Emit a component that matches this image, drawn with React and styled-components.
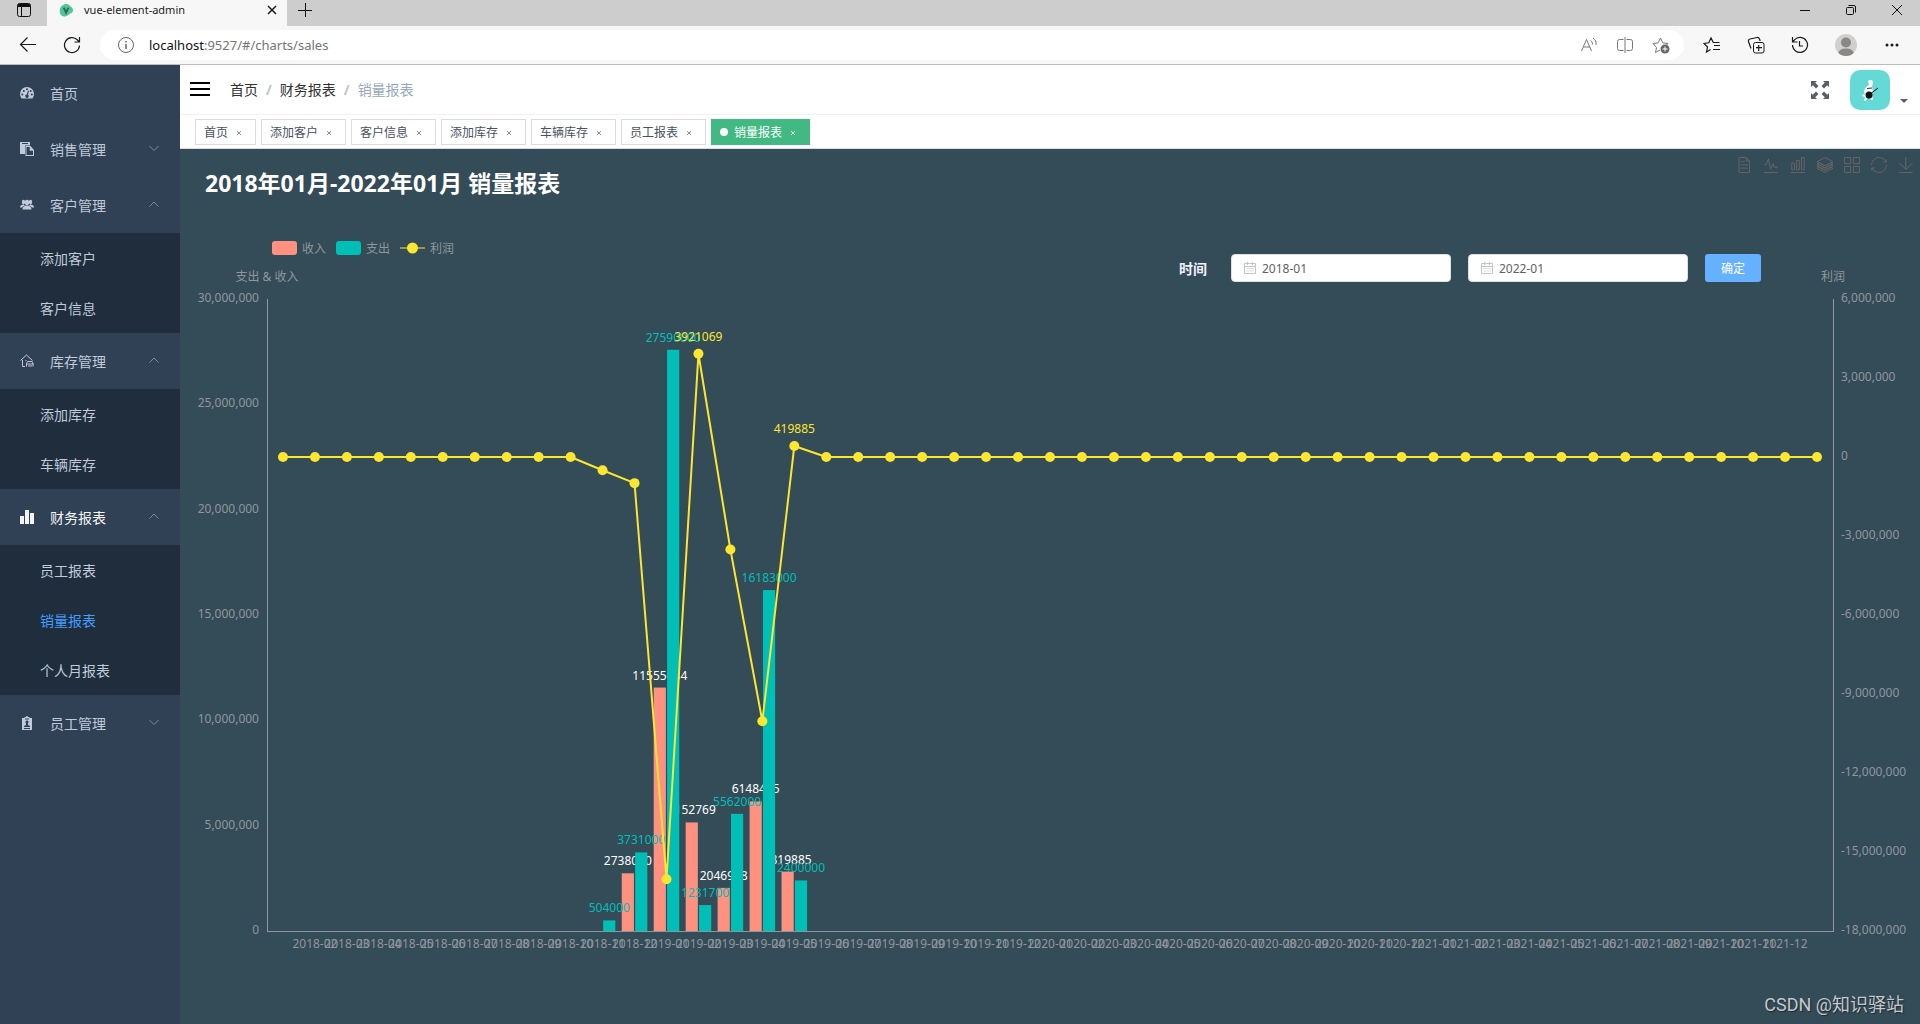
import React, { useLayoutEffect, useRef, useState } from "react";
import styled, { createGlobalStyle } from "styled-components";

const GlobalStyle = createGlobalStyle`
  * {
    box-sizing: border-box;
  }

  body {
    margin: 0;
    font-family: "Noto Sans", "Noto Sans CJK SC", sans-serif;
    font-size: 14px;
  }

  button,
  input {
    font-family: inherit;
  }

  button {
    padding: 0;
    border: 0;
    background: none;
    color: inherit;
    cursor: pointer;
  }

  a {
    color: inherit;
    text-decoration: none;
  }

  svg {
    display: block;
    flex-shrink: 0;
  }
`;

const Page = styled.div`
  display: flex;
  flex-direction: column;
  height: 100vh;
  overflow: hidden;
`;

/* browser window */

const TabStrip = styled.div`
  display: flex;
  height: 26px;
  background: #cdcdcd;
`;

const StripButton = styled.button`
  display: flex;
  align-items: center;
  justify-content: center;
  width: ${(props) => props.$width}px;
  height: 20px;
  color: #111;
`;

const BrowserTab = styled.div`
  display: flex;
  align-items: center;
  width: 240px;
  height: 26px;
  padding: 0 9px 6px 12px;
  background: #f7f7f7;
  font-size: 12px;
  line-height: 18px;
  color: #1b1b1b;
`;

const BrowserTitle = styled.span`
  flex: 1;
  margin-left: 10px;
  font-size: 11px;
`;

const WindowButtons = styled.div`
  display: flex;
  margin-left: auto;
`;

const AddressRow = styled.div`
  display: flex;
  align-items: center;
  height: 39px;
  padding: 0 6px;
  background: #f7f7f7;
  border-bottom: 1px solid #bdbdbd;
`;

const ToolButton = styled.button`
  display: flex;
  align-items: center;
  justify-content: center;
  width: ${(props) => props.$width || 44}px;
  height: 30px;
  color: ${(props) => props.$color || "#1b1b1b"};
`;

const AddressBar = styled.div`
  flex: 1;
  display: flex;
  align-items: center;
  height: 30px;
  margin: 0 6px;
  padding: 0 5px 0 18px;
  border-radius: 15px;
  background: #fff;
`;

const Url = styled.div`
  flex: 1;
  margin-left: 15px;
  font-size: 13px;
  color: #757575;

  span {
    color: #111;
  }
`;

const Face = styled.span`
  display: block;
  width: 22px;
  height: 22px;
  border-radius: 11px;
  overflow: hidden;
  background: #d2d0ce;
`;

/* app */

const Body = styled.div`
  flex: 1;
  display: flex;
  min-height: 0;
`;

const Sidebar = styled.nav`
  flex: 0 0 180px;
  background: #304156;
  color: #bfcbd9;
`;

const MenuItem = styled.button`
  display: flex;
  align-items: center;
  width: 100%;
  height: 56px;
  padding: 0 21px 0 20px;
  font-size: 14px;
  text-align: left;
  color: ${(props) => (props.$active ? "#f4f4f5" : "inherit")};

  span {
    flex: 1;
    margin-left: 16px;
  }
`;

const SubMenu = styled.div`
  background: #1f2d3d;
`;

const SubItem = styled.a`
  display: block;
  height: 50px;
  padding-left: 40px;
  line-height: 52px;
  color: ${(props) => (props.$active ? "#409eff" : "inherit")};
`;

const Main = styled.main`
  flex: 1;
  display: flex;
  flex-direction: column;
  min-width: 0;
`;

const Navbar = styled.header`
  display: flex;
  align-items: center;
  flex-shrink: 0;
  height: 50px;
  padding: 0 12px 0 10px;
  background: #fff;
  border-bottom: 1px solid #f0f1f3;
`;

const Breadcrumb = styled.div`
  flex: 1;
  margin-left: 20px;
  padding-bottom: 2px;
  color: #97a8be;

  a {
    color: #303133;
  }

  i {
    margin: 0 8px;
    font-style: normal;
    font-weight: 700;
    color: #c0c4cc;
  }
`;

const UserButton = styled.button`
  display: flex;
  align-items: flex-end;
  gap: 10px;
  margin-left: 20px;
`;

const Caret = styled.span`
  width: 8px;
  height: 11px;
  border: 4px solid transparent;
  border-top-color: #5a5e66;
  border-bottom-width: 3px;
`;

const Tags = styled.div`
  flex-shrink: 0;
  display: flex;
  align-items: flex-start;
  gap: 5px;
  height: 34px;
  padding: 4px 15px;
  background: #fff;
  border-bottom: 1px solid #d8dce5;
`;

const Tag = styled.a`
  display: flex;
  align-items: center;
  height: 26px;
  padding: 0 8px;
  border: 1px solid ${(props) => (props.$active ? "#42b983" : "#d8dce5")};
  background: ${(props) => (props.$active ? "#42b983" : "#fff")};
  color: ${(props) => (props.$active ? "#fff" : "#495060")};
  font-size: 12px;
`;

const Dot = styled.span`
  width: 8px;
  height: 8px;
  margin-right: 6px;
  border-radius: 4px;
  background: #fff;
`;

const TagClose = styled.button`
  display: flex;
  align-items: center;
  justify-content: center;
  width: 16px;
  height: 16px;
  margin: 2px 0 0 3px;
  color: ${(props) => (props.$active ? "#d5efe3" : "#8a8e96")};
`;

const Report = styled.section`
  position: relative;
  flex: 1;
  display: flex;
  flex-direction: column;
  min-height: 0;
  background: #344b58;
`;

const ReportHead = styled.div`
  flex-shrink: 0;
  display: flex;
  justify-content: space-between;
  height: 84px;
  padding: 0 6px 0 25px;
`;

const Title = styled.h1`
  margin: 0;
  font-size: 23px;
  line-height: 68px;
  color: #fff;
`;

const Toolbox = styled.div`
  display: flex;
  gap: 11px;
  padding-top: 7px;
  height: 24px;

  path {
    fill: none;
    stroke: #666;
    vector-effect: non-scaling-stroke;
  }
`;

const Legend = styled.div`
  flex-shrink: 0;
  display: flex;
  align-items: center;
  gap: 10px;
  height: 31px;
  padding: 0 0 2px calc(5% + 5px);
  font-size: 12px;
  color: #90979c;
`;

const LegendItem = styled.button`
  display: flex;
  align-items: center;
  gap: 5px;
  font-size: 12px;
`;

const Swatch = styled.span`
  width: 25px;
  height: 14px;
  border-radius: 3px;
  background: ${(props) => props.$color};
`;

const Filter = styled.form`
  position: absolute;
  top: 105px;
  right: 159px;
  display: flex;
  align-items: center;
  gap: 17px;
  color: #fff;
`;

const FilterLabel = styled.label`
  margin-right: 7px;
  font-weight: 700;
  color: #f0f2ff;
`;

const DateBox = styled.div`
  display: flex;
  align-items: center;
  width: 220px;
  height: 28px;
  padding: 0 12px;
  border: 1px solid #dcdfe6;
  border-radius: 4px;
  background: #fff;
  color: #c0c4cc;
`;

const DateInput = styled.input`
  flex: 1;
  min-width: 0;
  margin-left: 6px;
  padding: 0;
  border: 0;
  outline: 0;
  font-size: 12px;
  color: #606266;
`;

const Submit = styled.button`
  width: 56px;
  height: 28px;
  border-radius: 3px;
  background: #66b1ff;
  color: #fff;
  font-size: 12px;
`;

const Plot = styled.div`
  flex: 1;
  min-height: 0;
  overflow: hidden;

  text {
    font-size: 12px;
    fill: #90979c;
  }

  .axis {
    stroke: #90979c;
    shape-rendering: crispEdges;
  }
`;

const ValueLabel = styled.text`
  && {
    fill: ${(props) => props.$color};
    text-anchor: middle;
  }
`;

const Watermark = styled.div`
  position: absolute;
  right: 16px;
  bottom: 6px;
  font-family: Roboto, "Noto Sans CJK SC", sans-serif;
  font-size: 18px;
  line-height: 26px;
  color: #c3c9cd;
  text-shadow: 1px 1px 1px #1d2a31;
`;

const Icon = ({ size = 16, box = 16, fill = "none", stroke = "currentColor", children }) => (
  <svg
    width={size}
    height={size}
    viewBox={`0 0 ${box} ${box}`}
    fill={fill}
    stroke={stroke}
    aria-hidden="true"
  >
    {children}
  </svg>
);

const GaugeIcon = () => (
  <Icon size={14} box={14} fill="currentColor" stroke="none">
    <path d="M1.500 12.500A7 7 0 0 1 0 8a7 7 0 0 1 14 0 7 7 0 0 1-1.500 4.500z" />
    <g fill="#304156">
      <circle cx="2.300" cy="8.500" r="1" />
      <circle cx="3.800" cy="5" r="1" />
      <circle cx="7" cy="3.200" r="1" />
      <circle cx="10.700" cy="5" r="1" />
      <circle cx="11.800" cy="8.500" r="1" />
      <path d="M8 4.500l1 .3-1 4a1.700 1.700 0 1 1-1.200-.3z" />
    </g>
  </Icon>
);

const PasteIcon = () => (
  <Icon size={14} box={14} fill="currentColor" stroke="none">
    <path fillRule="evenodd" d="M0 0h10v3.500H5V12H0zM2 1v1h6V1z" />
    <path
      fillRule="evenodd"
      d="M5.500 4h5L14 8v6H5.500zM6.500 5v8H13V8.800H9.700V5z"
    />
  </Icon>
);

const PeopleIcon = () => (
  <Icon size={14} box={14} fill="currentColor" stroke="none">
    <ellipse cx="3.500" cy="4" rx="1.700" ry="2.200" />
    <ellipse cx="10.500" cy="4" rx="1.700" ry="2.200" />
    <ellipse cx="7" cy="4.500" rx="2.200" ry="2.800" />
    <path d="M0 9.500c0-2 1.500-2.800 3.500-3.200L5 7.500C3.300 8 2.500 8.700 2.300 9.500zM14 9.500c0-2-1.500-2.800-3.500-3.200L9 7.500c1.700.5 2.500 1.200 2.700 2z" />
    <path d="M2.500 11.500c0-2.500 1.500-3.200 3.500-4h2c2 .8 3.500 1.500 3.500 4z" />
  </Icon>
);

const HouseIcon = () => (
  <Icon size={14} box={14}>
    <path d="M.5 6.500L6.500 1l6 5.500M2.500 6v6.500H5M5.500 6.500h1" />
    <path d="M6.500 12.500V9.500l1-2h4.500l1 2v3M6.500 10h7M8 12h4" />
  </Icon>
);

const BarsIcon = () => (
  <Icon size={14} box={14} fill="currentColor" stroke="none">
    <path d="M0 6h4v8H0zM5 0h4v14H5zM10 3h4v11h-4z" />
  </Icon>
);

const BadgeIcon = () => (
  <Icon size={14} box={14} fill="currentColor" stroke="none">
    <path
      fillRule="evenodd"
      d="M2 2h2.500V1H6a1 1 0 0 1 2 0h1.500v1H12v12H2zM5 2.500v1h4v-1zM7 4.500a1.500 1.500 0 0 0-1 2.700V9L4 10v1h6v-1L8 9V7.200a1.500 1.500 0 0 0-1-2.700zM4 12v1h6v-1z"
    />
  </Icon>
);

const Chevron = ({ up }) => (
  <Icon size={10} box={10} stroke="#7f8a99">
    <path d={up ? "M.5 6.500L5 2 9.500 6.500" : "M.5 2L5 6.500 9.500 2"} />
  </Icon>
);

const menu = [
  { title: "首页", icon: <GaugeIcon /> },
  { title: "销售管理", icon: <PasteIcon />, children: [] },
  { title: "客户管理", icon: <PeopleIcon />, children: ["添加客户", "客户信息"] },
  { title: "库存管理", icon: <HouseIcon />, children: ["添加库存", "车辆库存"] },
  {
    title: "财务报表",
    icon: <BarsIcon />,
    active: true,
    children: ["员工报表", "销量报表", "个人月报表"],
  },
  { title: "员工管理", icon: <BadgeIcon />, children: [] },
];

const tags = ["首页", "添加客户", "客户信息", "添加库存", "车辆库存", "员工报表", "销量报表"];
const current = "销量报表";

const tools = [
  ["数据视图", "M17.5,17.3H33M45.4,29.5h-28M11.500,2v56H51V14.8L38.4,2H11.5zM38.4,2.2v12.7H51M45.4,41.7h-28"],
  ["切换为折线图", "M4.1,28.9h7.1l9.3-22l7.4,38l9.7-19.7l3,12.8h14.9M4.1,58h51.4"],
  ["切换为柱状图", "M6.7,22.9h10V48h-10V22.9zM24.9,13h10v35h-10V13zM43.2,2h10v46h-10V2zM3.1,58h53.7"],
  [
    "切换为堆叠",
    "M8.2,38.4l-8.4,4.1l30.6,15.3L60,42.5l-8.1-4.1l-21.5,11L8.2,38.4zM51.9,30l-8.1,4.2l-13.4,6.9l-13.9-6.9L8.2,30l-8.4,4.2l8.4,4.2l22.2,11l21.5-11l8.1-4.2L51.9,30zM51.9,21.7l-8.1,4.2L35.7,30l-5.3,2.8L24.9,30l-8.4-4.1l-8.3-4.2l-8.4,4.2L8.2,30l8.3,4.2l13.9,6.9l13.4-6.9l8.1-4.2l8.1-4.1L51.9,21.7zM30.4,2.2L-0.2,17.5l8.4,4.1l8.3,4.2l8.4,4.2l5.5,2.7l5.3-2.7l8.1-4.2l8.1-4.2l8.1-4.1L30.4,2.2z",
  ],
  ["切换为平铺", "M2.3,2.2h22.8V25H2.3V2.2zM35,2.2h22.8V25H35V2.2zM2.3,35h22.8v22.8H2.3V35zM35,35h22.8v22.8H35V35z"],
  [
    "还原",
    "M47,18.9h9.8V8.7M56.3,20.1C52.1,9,40.5,0.6,26.8,2.1C12.6,3.7,1.6,16.2,2.1,30.6M13,41.1H3.1v10.2M3.7,39.9c4.2,11.1,15.8,19.5,29.5,18c14.2-1.6,25.2-14.1,24.7-28.5",
  ],
  ["保存为图片", "M4.7,22.9L29.3,45.5L54.7,23.4M4.6,58H54.8M29.2,45.1V0"],
];

const months = Array.from({ length: 49 }, (_, i) => {
  const month = String((i % 12) + 1).padStart(2, "0");
  return `${2018 + Math.floor(i / 12)}-${month}`;
});

const income = {
  "2018-12": 2738000,
  "2019-01": 11555084,
  "2019-02": 5152769,
  "2019-03": 2046948,
  "2019-04": 6148465,
  "2019-05": 2819885,
};

const expense = {
  "2018-11": 504000,
  "2018-12": 3731000,
  "2019-01": 27590000,
  "2019-02": 1231700,
  "2019-03": 5562000,
  "2019-04": 16183000,
  "2019-05": 2400000,
};

const SalesChart = () => {
  const ref = useRef(null);
  const [size, setSize] = useState({ width: 1740, height: 760 });

  useLayoutEffect(() => {
    const measure = () =>
      setSize({ width: ref.current.clientWidth, height: ref.current.clientHeight });
    measure();
    window.addEventListener("resize", measure);
    return () => window.removeEventListener("resize", measure);
  }, []);

  const { width, height } = size;
  const left = Math.round(width * 0.05);
  const right = width - left;
  const top = 35;
  const bottom = height - 93;
  const band = (right - left) / months.length;
  const barWidth = (band * 0.8) / 2.1;
  const plotHeight = bottom - top;

  const x = (i) => left + band * (i + 0.5);
  const yMoney = (value) => bottom - (value / 30000000) * plotHeight;
  const yProfit = (value) => top + ((6000000 - value) / 24000000) * plotHeight;

  const points = months.map((month, i) => {
    const value = (income[month] || 0) - (expense[month] || 0);
    return { month, value, x: x(i), y: yProfit(value) };
  });

  const renderBars = (data, color, labelColor, offset) =>
    months.map((month, i) => {
      const value = data[month];
      if (!value) return null;
      const barX = x(i) + offset;
      const barY = yMoney(value);
      return (
        <g key={month}>
          <rect x={barX} y={barY} width={barWidth} height={bottom - barY} fill={color} />
          <ValueLabel $color={labelColor} x={barX + barWidth / 2} y={barY - 8}>
            {value}
          </ValueLabel>
        </g>
      );
    });

  return (
    <Plot ref={ref}>
      <svg width={width} height={height}>
        <path className="axis" fill="none" d={`M${left}.5 ${top}V${bottom}.5H${right}.5V${top}`} />
        <text x={left} y={17} textAnchor="middle">
          支出 &amp; 收入
        </text>
        <text x={right} y={17} textAnchor="middle">
          利润
        </text>
        {[30, 25, 20, 15, 10, 5, 0].map((n) => (
          <text key={n} x={left - 8} y={yMoney(n * 1000000) + 3} textAnchor="end">
            {(n * 1000000).toLocaleString("en-US")}
          </text>
        ))}
        {[6, 3, 0, -3, -6, -9, -12, -15, -18].map((n) => (
          <text key={n} x={right + 8} y={yProfit(n * 1000000) + 3}>
            {(n * 1000000).toLocaleString("en-US")}
          </text>
        ))}
        {months.slice(1, -1).map((month, i) => (
          <text key={month} x={x(i + 1)} y={bottom + 17} textAnchor="middle">
            {month}
          </text>
        ))}
        {renderBars(income, "#ff9180", "#fff", -barWidth * 1.05)}
        {renderBars(expense, "#00bfb7", "#00bfb7", barWidth * 0.05)}
        <polyline
          points={points.map((p) => `${p.x},${p.y}`).join(" ")}
          fill="none"
          stroke="#fce630"
          strokeWidth="2"
          strokeLinejoin="bevel"
        />
        {points.map((p) => (
          <circle key={p.month} cx={p.x} cy={p.y} r="5" fill="#fce630" />
        ))}
        {points
          .filter((p) => p.value > 0)
          .map((p) => (
            <ValueLabel key={p.month} $color="#fce630" x={p.x} y={p.y - 13}>
              {p.value}
            </ValueLabel>
          ))}
      </svg>
    </Plot>
  );
};

const CalendarIcon = () => (
  <Icon size={12} box={12}>
    <path d="M.5 1.500h11v10H.5zM.5 4.500h11M3.500 0v3M8.500 0v3" />
    <path d="M2.500 6.500h7M2.500 9h7" strokeDasharray="1 1" />
  </Icon>
);

const Browser = () => (
  <>
    <TabStrip>
      <StripButton $width={47} aria-label="标签页操作">
        <Icon size={16}>
          <rect x="1.500" y="1.500" width="13" height="13" rx="2" />
          <path d="M2 3.500h12" strokeWidth="3" />
          <path d="M5.500 5v9" />
        </Icon>
      </StripButton>
      <BrowserTab>
        <Icon size={15} stroke="none">
          <path
            fill="#4fc795"
            d="M4 2.500C7 .5 9 1 11 2.500c2 1.500 4.500 3.500 4 6-.5 2-3 2-5 4-2 2-5 2.500-7 1C.5 12 .5 9 1 7c.3-2 1-3.300 3-4.500z"
          />
          <path d="M5 5l2.500 5.500L10 5" fill="none" stroke="#2f6858" strokeWidth="2" />
        </Icon>
        <BrowserTitle>vue-element-admin</BrowserTitle>
        <button aria-label="关闭标签页">
          <Icon size={12} box={12}>
            <path d="M2 2l8 8M10 2l-8 8" strokeWidth="1.500" />
          </Icon>
        </button>
      </BrowserTab>
      <StripButton $width={36} aria-label="新建标签页">
        <Icon size={16}>
          <path d="M1 8.500h14M8.500 1v14" />
        </Icon>
      </StripButton>
      <WindowButtons>
        <StripButton $width={46} aria-label="最小化">
          <Icon size={12} box={12}>
            <path d="M1 6.500h10" />
          </Icon>
        </StripButton>
        <StripButton $width={46} aria-label="还原">
          <Icon size={12} box={12}>
            <rect x="1.500" y="3.500" width="7" height="7" rx="1" />
            <path d="M3.500 1.500H9A1.500 1.500 0 0 1 10.500 3v5.500" />
          </Icon>
        </StripButton>
        <StripButton $width={46} aria-label="关闭">
          <Icon size={12} box={12}>
            <path d="M1 1l10 10M11 1L1 11" />
          </Icon>
        </StripButton>
      </WindowButtons>
    </TabStrip>
    <AddressRow>
      <ToolButton aria-label="后退">
        <Icon size={18} box={18}>
          <path d="M17 8.500H1.500M8.500 1.500l-7 7 7 7" strokeWidth="1.200" />
        </Icon>
      </ToolButton>
      <ToolButton aria-label="刷新">
        <Icon size={18} box={18}>
          <path d="M16.500 9.500A7.500 7.500 0 1 1 14.500 4l2 2M16.500 1v5h-5" strokeWidth="1.200" />
        </Icon>
      </ToolButton>
      <AddressBar>
        <Icon size={16} stroke="#666">
          <circle cx="8" cy="8" r="7.500" />
          <path d="M8 7v5M8 4v1.500" strokeWidth="1.500" />
        </Icon>
        <Url>
          <span>localhost</span>:9527/#/charts/sales
        </Url>
        <ToolButton $width={36} $color="#777" aria-label="大声朗读">
          <Icon size={16}>
            <path d="M.5 14L5.500 2.500l5 11.500M2.500 10h6.500M9.500 3.500c1.500 1 2 2 2 4M12 1c2.300 1.500 3.500 4 3 7" />
          </Icon>
        </ToolButton>
        <ToolButton $width={36} $color="#777" aria-label="拆分屏幕">
          <Icon size={16}>
            <path d="M6.500 2.500h-4a2 2 0 0 0-2 2v7a2 2 0 0 0 2 2h4M9.500 2.500h4a2 2 0 0 1 2 2v7a2 2 0 0 1-2 2h-4M8 0v16" />
          </Icon>
        </ToolButton>
        <ToolButton $width={36} $color="#777" aria-label="收藏此页">
          <Icon size={18} box={18}>
            <path d="M8 14l-4.500 2.500 1-5L1 7.500l5-.6L8.500 2l2.300 4.900 5.200.6-1.500 1.500" />
            <circle cx="13" cy="13" r="4.500" fill="#666" stroke="none" />
            <path d="M10.500 13h5M13 10.500v5" stroke="#fff" />
          </Icon>
        </ToolButton>
      </AddressBar>
      <ToolButton aria-label="收藏夹">
        <Icon size={18} box={18}>
          <path d="M7.500 13.500L3.500 16l1-5L1 7.500l4.800-.7L8 2l2.300 4.500h6.200M11 9.500h6M10 13.500h7" strokeWidth="1.200" />
        </Icon>
      </ToolButton>
      <ToolButton aria-label="集锦">
        <Icon size={18} box={18}>
          <rect x="6.500" y="6.500" width="10.500" height="10.500" rx="2" />
          <path d="M9 11.700h6M11.700 9v6M4 12.500l-2.500-7A2 2 0 0 1 3 3l7-1.500A2 2 0 0 1 12.500 3l.7 2" strokeWidth="1.200" />
        </Icon>
      </ToolButton>
      <ToolButton aria-label="历史记录">
        <Icon size={18} box={18}>
          <path d="M1.500 9a7.500 7.500 0 1 0 2-5.200L1.500 6M1.500 1v5h5M8.500 5v5H12" strokeWidth="1.200" />
        </Icon>
      </ToolButton>
      <ToolButton $width={48} aria-label="个人资料">
        <Face>
          <Icon size={22} box={22} fill="#8a8886" stroke="none">
            <circle cx="11" cy="8.500" r="5" />
            <path d="M3 19c2-4 5-4.500 8-4.500s6 .5 8 4.500l-3 4H6z" />
          </Icon>
        </Face>
      </ToolButton>
      <ToolButton aria-label="设置及其他">
        <Icon size={14} box={14} fill="currentColor" stroke="none">
          <circle cx="2" cy="7" r="1.500" />
          <circle cx="7" cy="7" r="1.500" />
          <circle cx="12" cy="7" r="1.500" />
        </Icon>
      </ToolButton>
    </AddressRow>
  </>
);

const App = () => {
  const [start, setStart] = useState("2018-01");
  const [end, setEnd] = useState("2022-01");

  return (
    <Page>
      <GlobalStyle />
      <Browser />
      <Body>
        <Sidebar>
          {menu.map((item) => (
            <React.Fragment key={item.title}>
              <MenuItem $active={item.active}>
                {item.icon}
                <span>{item.title}</span>
                {item.children && <Chevron up={item.children.length > 0} />}
              </MenuItem>
              {item.children && (
                <SubMenu>
                  {item.children.map((child) => (
                    <SubItem key={child} href="#" $active={child === current}>
                      {child}
                    </SubItem>
                  ))}
                </SubMenu>
              )}
            </React.Fragment>
          ))}
        </Sidebar>
        <Main>
          <Navbar>
            <button aria-label="收起菜单">
              <Icon size={20} box={20} stroke="#000">
                <path d="M0 3h20M0 9h20M0 15h20" strokeWidth="2" />
              </Icon>
            </button>
            <Breadcrumb>
              <a href="#">首页</a>
              <i>/</i>
              <a href="#">财务报表</a>
              <i>/</i>
              销量报表
            </Breadcrumb>
            <button aria-label="全屏">
              <Icon size={20} box={20} fill="#5a5e66" stroke="none">
                <path d="M1 1h6L5.200 2.800 8.500 6 6 8.500 2.800 5.200 1 7zM19 1v6l-1.800-1.800L14 8.500 11.500 6l3.300-3.200L13 1zM1 19v-6l1.800 1.800L6 11.500 8.500 14l-3.300 3.200L7 19zM19 19h-6l1.800-1.800L11.500 14l2.500-2.500 3.200 3.300L19 13z" />
              </Icon>
            </button>
            <UserButton aria-label="用户">
              <Icon size={40} box={40} stroke="none">
                <rect width="40" height="40" rx="10" fill="#65d9d6" />
                <path
                  fill="#fff"
                  d="M18 11c2-2 5-1 5 1l-1 5 1 4-1 4 1 5h-2l-1-3-3 1-1 3h-2l1-4-3-1 1-2 2 1-1-4 2-4 3-2z"
                />
                <circle cx="19" cy="25" r="3.500" fill="#111" />
                <path d="M19 25l9-7" stroke="#111" />
                <path d="M17 18.500l5-.5" stroke="#333" />
              </Icon>
              <Caret />
            </UserButton>
          </Navbar>
          <Tags>
            {tags.map((tag) => (
              <Tag key={tag} href="#" $active={tag === current}>
                {tag === current && <Dot />}
                {tag}
                <TagClose $active={tag === current} aria-label={`关闭${tag}`}>
                  <Icon size={6} box={6}>
                    <path d="M1 1l4 4M5 1L1 5" />
                  </Icon>
                </TagClose>
              </Tag>
            ))}
          </Tags>
          <Report>
            <ReportHead>
              <Title>2018年01月-2022年01月 销量报表</Title>
              <Toolbox>
                {tools.map(([name, path]) => (
                  <button key={name} aria-label={name}>
                    <Icon box={60}>
                      <path d={path} />
                    </Icon>
                  </button>
                ))}
              </Toolbox>
            </ReportHead>
            <Legend>
              <LegendItem>
                <Swatch $color="#ff9180" />
                收入
              </LegendItem>
              <LegendItem>
                <Swatch $color="#00bfb7" />
                支出
              </LegendItem>
              <LegendItem>
                <svg width="25" height="14" fill="#fce630" aria-hidden="true">
                  <path d="M0 6.500h25v1H0z" />
                  <circle cx="12.500" cy="7" r="5.500" />
                </svg>
                利润
              </LegendItem>
            </Legend>
            <SalesChart />
            <Filter onSubmit={(e) => e.preventDefault()}>
              <FilterLabel htmlFor="start">时间</FilterLabel>
              <DateBox>
                <CalendarIcon />
                <DateInput id="start" value={start} onChange={(e) => setStart(e.target.value)} />
              </DateBox>
              <DateBox>
                <CalendarIcon />
                <DateInput
                  aria-label="结束时间"
                  value={end}
                  onChange={(e) => setEnd(e.target.value)}
                />
              </DateBox>
              <Submit type="submit">确定</Submit>
            </Filter>
            <Watermark>CSDN @知识驿站</Watermark>
          </Report>
        </Main>
      </Body>
    </Page>
  );
};

export default App;
